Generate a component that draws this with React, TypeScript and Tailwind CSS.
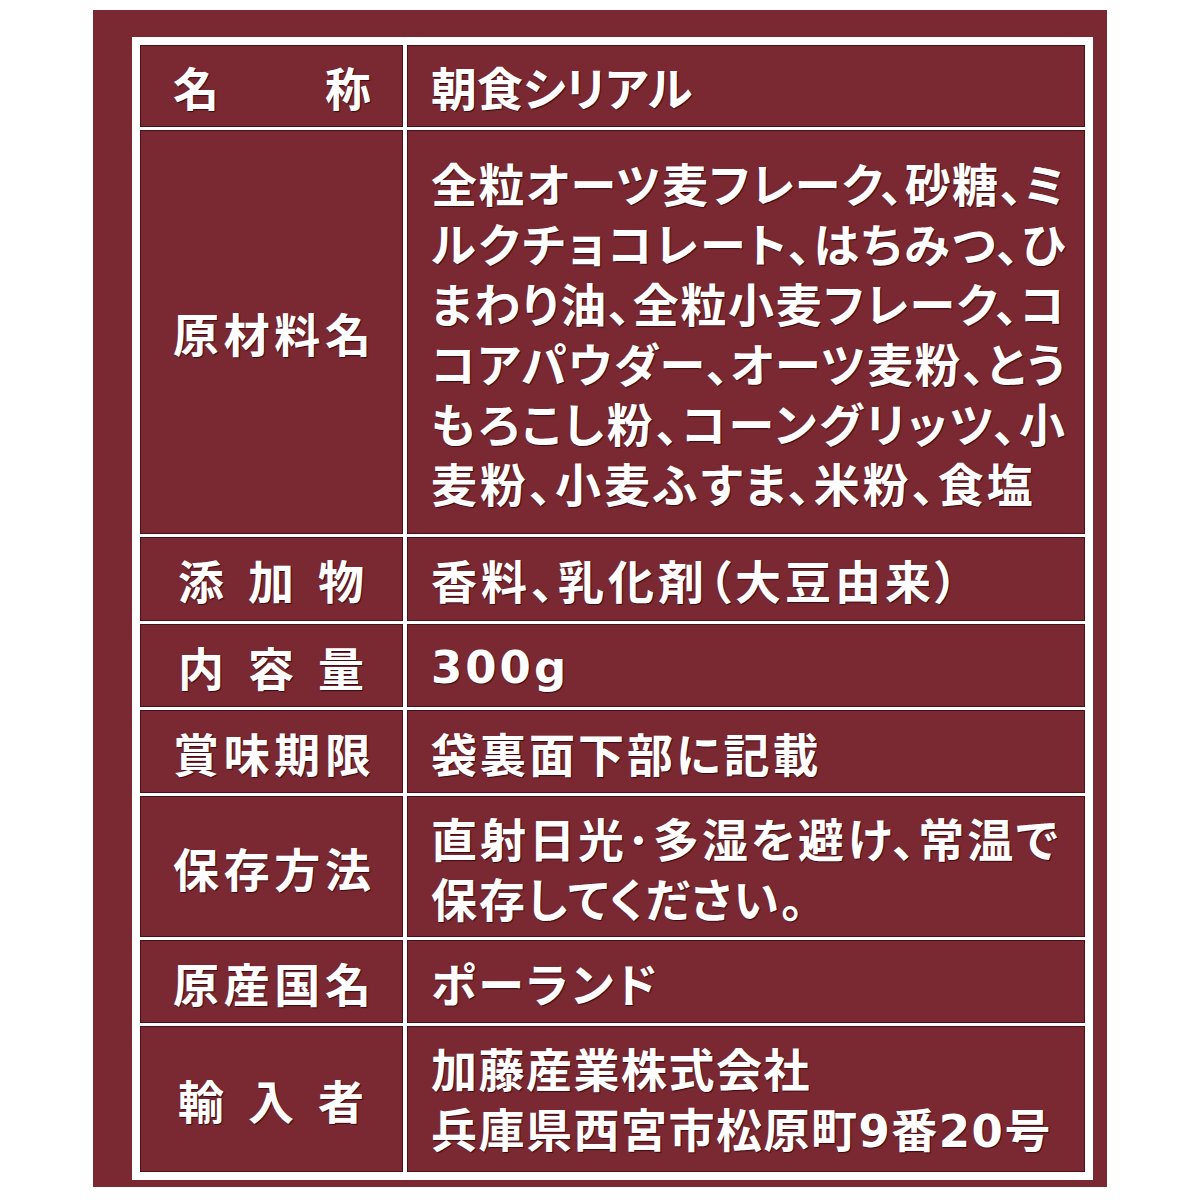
import React from 'react';

type Line = { t: string; cls?: string };

type Row = {
  label: string[];
  labelPad: string;
  lines: Line[];
};

const JUST = 'w-[634px] [text-align-last:justify]';

const rows: Row[] = [
  { label: ['名', '称'], labelPad: 'pl-[33px] pr-[32px]', lines: [{ t: '朝食シリアル' }] },
  {
    label: ['原', '材', '料', '名'],
    labelPad: 'pl-[33px] pr-[32px]',
    lines: [
      { t: '全粒オーツ麦フレーク、砂糖、ミ', cls: JUST },
      { t: 'ルクチョコレート、はちみつ、ひ', cls: JUST },
      { t: 'まわり油、全粒小麦フレーク、コ', cls: JUST },
      { t: 'コアパウダー、オーツ麦粉、とう', cls: JUST },
      { t: 'もろこし粉、コーングリッツ、小', cls: JUST },
      { t: '麦粉、小麦ふすま、米粉、食塩', cls: 'tracking-[3px]' },
    ],
  },
  {
    label: ['添', '加', '物'],
    labelPad: 'pl-[38px] pr-[39px]',
    lines: [{ t: '香料、乳化剤（大豆由来）', cls: 'tracking-[4px]' }],
  },
  { label: ['内', '容', '量'], labelPad: 'pl-[38px] pr-[39px]', lines: [{ t: '300g', cls: 'tracking-[3px]' }] },
  {
    label: ['賞', '味', '期', '限'],
    labelPad: 'pl-[33px] pr-[32px]',
    lines: [{ t: '袋裏面下部に記載', cls: 'tracking-[3px]' }],
  },
  {
    label: ['保', '存', '方', '法'],
    labelPad: 'pl-[33px] pr-[32px]',
    lines: [
      { t: '直射日光･多湿を避け、常温で', cls: 'tracking-[3px]' },
      { t: '保存してください。', cls: 'tracking-[2px]' },
    ],
  },
  {
    label: ['原', '産', '国', '名'],
    labelPad: 'pl-[33px] pr-[32px]',
    lines: [{ t: 'ポーランド', cls: 'tracking-[3px]' }],
  },
  {
    label: ['輸', '入', '者'],
    labelPad: 'pl-[38px] pr-[39px]',
    lines: [
      { t: '加藤産業株式会社', cls: 'tracking-[1.5px]' },
      { t: '兵庫県西宮市松原町9番20号', cls: 'tracking-[1.5px]' },
    ],
  },
];

const cell = 'bg-[#7a2932] shadow-[inset_0_0_0_1px_#4a1019] flex items-center';
const txt =
  'text-white text-[46px] leading-[60px] font-bold [font-feature-settings:"palt"] [text-shadow:1px_1px_1px_#3a0a10]';

// digits are set in a wider latin face, as on the label
const TextLine = ({ line }: { line: Line }) => (
  <div className={`whitespace-nowrap ${line.cls ?? ''}`}>
    {line.t.split(/(\d+g?)/).map((part, i) =>
      /\d/.test(part) ? (
        <span key={i} className="font-['DejaVu_Sans',sans-serif] text-[45px]">
          {part}
        </span>
      ) : (
        <span key={i}>{part}</span>
      )
    )}
  </div>
);

export default function App() {
  return (
    <div className="w-[1200px] h-[1200px] bg-white pt-[10px] pl-[93px] font-['Noto_Sans_CJK_JP','Noto_Sans',sans-serif]">
      <div className="w-[1014px] h-[1177px] bg-[#7a2932] pt-[27px] pl-[39px]">
        <div className="w-[961px] h-[1143px] bg-white p-[8px]">
          <div className="grid grid-cols-[263px_1fr] grid-rows-[82px_404px_84px_83px_83px_141px_83px_146px] gap-x-[4px] gap-y-[3px] bg-white h-full">
            {rows.map((row, i) => (
              <React.Fragment key={i}>
                <div className={`${cell} justify-between ${row.labelPad}`}>
                  {row.label.map((ch, j) => (
                    <span key={j} className={txt}>
                      {ch}
                    </span>
                  ))}
                </div>
                <div className={`${cell} pl-[24px]`}>
                  <div className={txt}>
                    {row.lines.map((line, j) => (
                      <TextLine key={j} line={line} />
                    ))}
                  </div>
                </div>
              </React.Fragment>
            ))}
          </div>
        </div>
      </div>
    </div>
  );
}
